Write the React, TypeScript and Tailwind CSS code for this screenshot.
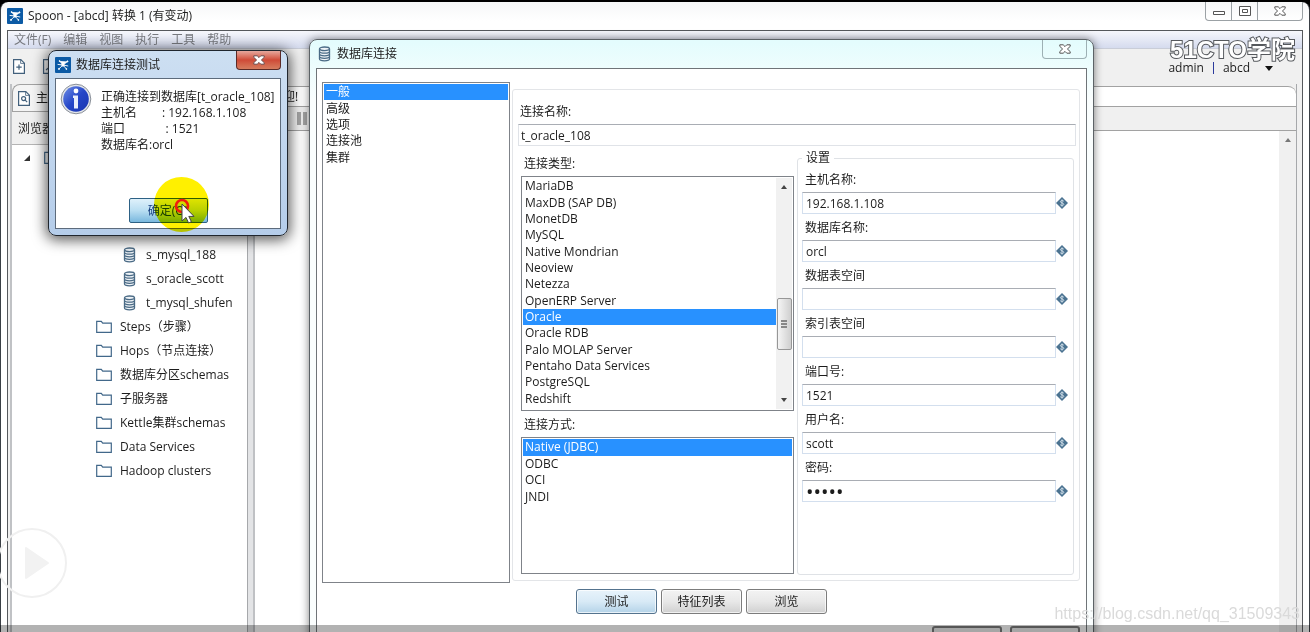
import type { ReactNode } from "react";

const FONT = "font-['Open_Sans','Noto_Sans_CJK_SC',sans-serif]";

const dbTypes = [
  "MariaDB",
  "MaxDB (SAP DB)",
  "MonetDB",
  "MySQL",
  "Native Mondrian",
  "Neoview",
  "Netezza",
  "OpenERP Server",
  "Oracle",
  "Oracle RDB",
  "Palo MOLAP Server",
  "Pentaho Data Services",
  "PostgreSQL",
  "Redshift",
];

const fields = [
  { id: "host", label: "主机名称:", value: "192.168.1.108" },
  { id: "database", label: "数据库名称:", value: "orcl" },
  { id: "data-space", label: "数据表空间", value: "" },
  { id: "index-space", label: "索引表空间", value: "" },
  { id: "port", label: "端口号:", value: "1521" },
  { id: "user", label: "用户名:", value: "scott" },
  { id: "password", label: "密码:", value: "scott" },
];

const folders = [
  "Steps（步骤）",
  "Hops（节点连接）",
  "数据库分区schemas",
  "子服务器",
  "Kettle集群schemas",
  "Data Services",
  "Hadoop clusters",
];

function SpoonIcon() {
  return (
    <svg viewBox="0 0 16 16" className="size-4 shrink-0" aria-hidden="true">
      <rect width="16" height="16" rx="1" fill="#0b5aa5" />
      <g stroke="#fff" strokeWidth=".9" fill="#fff">
        <path d="M4.6 4 8 8l4.6-3.6M8 8l-4 3.8M8 8l3.4 4M2.6 7.4 8 8l5.2 1" />
        <circle cx="8" cy="8" r="1.2" />
        <circle cx="4.6" cy="4" r=".5" />
        <circle cx="12.4" cy="4.4" r=".6" />
        <circle cx="4" cy="11.9" r=".6" />
        <circle cx="11.4" cy="12" r=".5" />
      </g>
    </svg>
  );
}

function DatabaseIcon() {
  return (
    <svg viewBox="0 0 13 16" className="h-4 w-[13px] shrink-0" fill="#eef3f7" stroke="#4b6b86" strokeWidth="1.3" aria-hidden="true">
      <path d="M1.5 3v10c0 1 2.2 1.8 5 1.8s5-.8 5-1.8V3" />
      <ellipse cx="6.5" cy="2.8" rx="5" ry="1.8" />
      <path fill="none" d="M1.5 5.4c0 1 2.2 1.8 5 1.8s5-.8 5-1.8M1.5 8c0 1 2.2 1.8 5 1.8s5-.8 5-1.8M1.5 10.6c0 1 2.2 1.8 5 1.8s5-.8 5-1.8" />
    </svg>
  );
}

function FolderIcon() {
  return (
    <svg viewBox="0 0 16 14" className="h-[14px] w-4 shrink-0" fill="none" stroke="#42688a" strokeWidth="1.2" aria-hidden="true">
      <path d="M.7 12.4V1.4h4.6l1.4 1.8h8.6v9.2z" />
    </svg>
  );
}

function PageIcon({ children }: { children: ReactNode }) {
  return (
    <svg viewBox="0 0 12 15" className="h-[15px] w-3 shrink-0" fill="none" stroke="#42607c" strokeWidth="1.2" aria-hidden="true">
      <path fill="#fff" d="M.6.6h7.2l3.6 3.6v10.2H.6z" />
      <path d="M7.6.8v3.6h3.6" strokeWidth=".8" />
      {children}
    </svg>
  );
}

function VariableIcon() {
  return (
    <svg viewBox="0 0 12 12" className="size-3 shrink-0" aria-hidden="true">
      <path d="M6 0 12 6 6 12 0 6z" fill="#4b7391" />
      <path d="M7.8 4.2C7 3.2 4.4 3.3 4.4 4.7c0 1.5 3.4 1 3.4 2.6 0 1.4-2.7 1.5-3.6.4M6 2.4v7.2" fill="none" stroke="#d5e2ec" strokeWidth=".9" />
    </svg>
  );
}

function CloseGlyph() {
  return (
    <svg viewBox="0 0 12 10" className="h-[10px] w-3" aria-hidden="true">
      <path
        d="M.8.8h3.4L6 2.6 7.8.8h3.4v1.6L8.4 5l2.8 2.6v1.6H7.8L6 7.4 4.2 9.2H.8V7.6L3.6 5 .8 2.4z"
        fill="#fff"
        stroke="currentColor"
        strokeWidth="1"
        strokeLinejoin="round"
      />
    </svg>
  );
}

function ListOption({ label, selected = false }: { label: string; selected?: boolean }) {
  return (
    <li
      role="option"
      aria-selected={selected}
      className={`flex min-h-0 flex-1 items-center pl-[2px] ${selected ? "bg-[#2891ff] text-white" : ""}`}
    >
      {label}
    </li>
  );
}

function PushButton({ children, primary = false }: { children: ReactNode; primary?: boolean }) {
  return (
    <button
      type="button"
      className={`h-[25px] w-[81px] rounded-[3px] border shadow-[inset_0_0_0_1px_rgba(255,255,255,0.7)] ${
        primary
          ? "border-[#54738e] bg-linear-to-b from-[#e8f3fb] via-[#d8eaf6] to-[#b4d3e8]"
          : "border-[#7c7c7c] bg-linear-to-b from-[#f3f3f3] via-[#e8e8e8] to-[#d0d0d0]"
      }`}
    >
      {children}
    </button>
  );
}

function MainWindow() {
  return (
    <main className="flex h-full flex-col rounded-t-lg border-x border-x-[#3a3f45] bg-linear-to-b from-[#f6f7f8] to-white to-3% px-[6px]">
      <header className="flex h-7 shrink-0 items-start justify-between">
        <h1 className="flex h-7 items-center gap-[5px]">
          <SpoonIcon />
          Spoon - [abcd] 转换 1 (有变动)
        </h1>
        <div className="flex h-[19px] divide-x divide-[#9ba1a5] rounded-b-[4px] border border-t-0 border-[#9ba1a5] text-[#555]">
          <button type="button" aria-label="最小化" className="flex w-[26px] items-center justify-center">
            <svg viewBox="0 0 12 10" className="h-[10px] w-3" fill="#fff" stroke="currentColor">
              <path d="M.5 5.5h11v3H.5z" />
            </svg>
          </button>
          <button type="button" aria-label="最大化" className="flex w-[26px] items-center justify-center">
            <svg viewBox="0 0 12 10" className="h-[10px] w-3" fill="#fff" stroke="currentColor">
              <path d="M.5.5h11v9H.5zM3.5 3.5h5v3h-5z" />
            </svg>
          </button>
          <button type="button" aria-label="关闭" className="flex w-[44px] items-center justify-center">
            <CloseGlyph />
          </button>
        </div>
      </header>

      <div className="flex min-h-0 flex-1 flex-col border border-b-0 border-[#55585c] bg-[#f0f0f0]">
        <nav className="flex h-[18px] shrink-0 items-center gap-3 border-b border-[#c9cdd8] bg-linear-to-b from-[#f6f7fc] to-[#d5dbee] pl-[6px] text-[#77797f]">
          {["文件(F)", "编辑", "视图", "执行", "工具", "帮助"].map((item) => (
            <button key={item} type="button">
              {item}
            </button>
          ))}
        </nav>
        <div className="flex h-[35px] shrink-0 items-center justify-between pr-[29px] pl-[5px]">
          <div className="flex gap-[18px]">
            <button type="button" aria-label="新建">
              <PageIcon>
                <path d="M6 5.4v5.4M3.3 8.1h5.4" />
              </PageIcon>
            </button>
            <button type="button" aria-label="打开">
              <PageIcon>
                <path d="M3 11 9 6" />
              </PageIcon>
            </button>
          </div>
          <div className="flex items-center gap-[9px] pt-[3px]">
            <span>admin</span>
            <span className="h-3 w-px bg-[#2b3a9c]" />
            <span>abcd</span>
            <svg viewBox="0 0 8 5" className="ml-[6px] h-[5px] w-2" aria-hidden="true">
              <path d="M0 0h8L4 5z" fill="#111" />
            </svg>
          </div>
        </div>

        <div className="flex min-h-0 flex-1 pr-[5px] pl-[2px]">
          <aside className="flex w-[238px] shrink-0 flex-col border-r border-l-2 border-r-[#a6a8ab] border-l-[#c0c2c5]">
            <div className="flex h-7 items-center gap-[6px] rounded-tl-lg border-t border-b border-l border-[#a2a2a2] bg-[#f4f4f4] pl-[5px]">
              <PageIcon>
                <circle cx="5.6" cy="7.6" r="2" />
                <path d="m7.2 9.2 2 2" />
              </PageIcon>
              主对象树
            </div>
            <div className="flex h-[33px] items-center border-b border-[#b4b4b4] pt-[2px] pl-[6px]">浏览器</div>
            <div className="min-h-0 flex-1 overflow-hidden bg-white pt-px">
              <div className="flex h-6 items-center gap-[14px] pl-3">
                <svg viewBox="0 0 6 6" className="size-[6px]" aria-hidden="true">
                  <path d="M6 0v6H0z" fill="#333" />
                </svg>
                <FolderIcon />
              </div>
              <ul className="pt-[73px]">
                {["s_mysql_188", "s_oracle_scott", "t_mysql_shufen"].map((name) => (
                  <li key={name} className="flex h-6 items-center gap-[10px] pl-[111px]">
                    <DatabaseIcon />
                    {name}
                  </li>
                ))}
                {folders.map((name) => (
                  <li key={name} className="flex h-6 items-center gap-2 pl-[84px] whitespace-nowrap">
                    <FolderIcon />
                    {name}
                  </li>
                ))}
              </ul>
            </div>
          </aside>
          <div className="w-[7px] shrink-0 border-r-2 border-[#bfc1c4] bg-[#e3e4e6]" />
          <section className="flex min-w-0 flex-1 flex-col border-r border-[#a6a8ab]">
            <div className="mt-[2px] flex h-[21px] shrink-0 items-center rounded-tr-lg border-t border-b border-[#a2a2a2] bg-white pl-[28px]">
              迎!
            </div>
            <div className="flex h-6 shrink-0 items-center gap-[2px] border-b border-[#a2a2a2] pl-[42px]">
              <span className="h-[13px] w-[4px] bg-[#a3a3a3]" />
              <span className="h-[13px] w-[4px] bg-[#a3a3a3]" />
            </div>
            <div className="flex min-h-0 flex-1 justify-end bg-white">
              <div className="flex w-[17px] justify-center bg-[#f0f0f0] pt-[7px]">
                <svg viewBox="0 0 6 4" className="h-1 w-[6px]" aria-hidden="true">
                  <path d="M3 0 6 4H0z" fill="#777" />
                </svg>
              </div>
            </div>
          </section>
        </div>
      </div>
    </main>
  );
}

function ConnectionDialog() {
  return (
    <section
      aria-label="数据库连接"
      className="absolute top-[39px] right-[216px] -bottom-3 left-[309px] flex flex-col rounded-t-lg border border-[#5c6266] bg-linear-to-b from-[#e3fcfd] to-[#fafefe] to-10% px-[6px] shadow-[0_0_9px_rgba(0,0,0,0.5)]"
    >
      <header className="flex h-7 shrink-0 items-start justify-between">
        <h2 className="flex h-7 items-center gap-[6px] pl-[2px]">
          <DatabaseIcon />
          数据库连接
        </h2>
        <button
          type="button"
          aria-label="关闭"
          className="flex h-[19px] w-[45px] items-center justify-center rounded-b-[4px] border border-t-0 border-[#9db0b4] text-[#555]"
        >
          <CloseGlyph />
        </button>
      </header>
      <div className="flex min-h-0 flex-1 flex-col border border-b-0 border-[#6f7478] bg-white pt-[13px]">
        <div className="flex h-[501px] shrink-0 gap-[2px] pr-[6px] pl-[5px]">
          <div className="w-[188px] shrink-0 border border-[#7f8389] p-px">
            <ul role="listbox" aria-label="类别" className="flex h-[82px] flex-col">
              {["一般", "高级", "选项", "连接池", "集群"].map((name, i) => (
                <ListOption key={name} label={name} selected={i === 0} />
              ))}
            </ul>
          </div>
          <div className="mt-[7px] mb-[2px] flex min-w-0 flex-1 flex-col rounded-[3px] border border-[#e3e5e8] pt-[14px] pr-[3px] pl-[5px]">
            <label htmlFor="name" className="pl-[2px]">
              连接名称:
            </label>
            <input
              id="name"
              defaultValue="t_oracle_108"
              className="mt-1 h-[22px] border border-[#e0e3e8] border-t-[#a9adb4] pl-[2px]"
            />
            <div className="grid min-h-0 flex-1 grid-cols-[273px_minmax(0,1fr)] gap-[3px] pr-[2px] pb-[5px] pl-[3px]">
              <div className="flex flex-col gap-1 pt-2">
                <span id="type-label" className="pt-[2px] pl-[3px]">
                  连接类型:
                </span>
                <div className="flex h-[235px] shrink-0 border border-[#7f8389] p-px">
                  <ul role="listbox" aria-labelledby="type-label" className="flex flex-1 flex-col pb-[2px]">
                    {dbTypes.map((name) => (
                      <ListOption key={name} label={name} selected={name === "Oracle"} />
                    ))}
                  </ul>
                  <div className="flex w-4 flex-col items-center bg-[#f1f1f1] pt-[7px] pb-[7px]">
                    <svg viewBox="0 0 6 4" className="h-1 w-[6px]" aria-hidden="true">
                      <path d="M3 0 6 4H0z" fill="#444" />
                    </svg>
                    <span className="mt-[109px] flex h-[52px] w-[15px] flex-col items-center justify-center gap-px rounded-[2px] border border-[#979797] bg-linear-to-r from-[#f5f5f5] to-[#cfcfcf]">
                      <span className="h-[2px] w-[6px] bg-[#888]" />
                      <span className="h-[2px] w-[6px] bg-[#888]" />
                      <span className="h-[2px] w-[6px] bg-[#888]" />
                    </span>
                    <svg viewBox="0 0 6 4" className="mt-auto h-1 w-[6px]" aria-hidden="true">
                      <path d="M0 0h6L3 4z" fill="#444" />
                    </svg>
                  </div>
                </div>
                <span id="access-label" className="pt-[2px] pl-[3px]">
                  连接方式:
                </span>
                <div className="h-[137px] shrink-0 border border-[#7f8389] p-px">
                  <ul role="listbox" aria-labelledby="access-label" className="flex h-[66px] flex-col">
                    {["Native (JDBC)", "ODBC", "OCI", "JNDI"].map((name, i) => (
                      <ListOption key={name} label={name} selected={i === 0} />
                    ))}
                  </ul>
                </div>
              </div>
              <fieldset className="mt-1 min-w-0 rounded-[3px] border border-[#dfe2e6] pr-[5px] pl-[4px]">
                <legend className="px-1">设置</legend>
                <div className="flex flex-col gap-1 pt-1">
                  {fields.map(({ id, label, value }) => (
                    <div key={id} className="flex flex-col gap-1">
                      <label htmlFor={id} className="pt-[2px] pl-[3px]">
                        {label}
                      </label>
                      <div className="flex items-center">
                        <input
                          id={id}
                          type={id === "password" ? "password" : "text"}
                          defaultValue={value}
                          className={`h-[22px] min-w-0 flex-1 border border-[#d3dfee] border-t-[#a9adb4] pl-[3px] ${
                            id === "password" ? "text-xl leading-5" : ""
                          }`}
                        />
                        <VariableIcon />
                      </div>
                    </div>
                  ))}
                </div>
              </fieldset>
            </div>
          </div>
        </div>
        <div className="flex shrink-0 justify-center gap-1 pt-[6px]">
          <PushButton primary>测试</PushButton>
          <PushButton>特征列表</PushButton>
          <PushButton>浏览</PushButton>
        </div>
        <div className="flex shrink-0 justify-end gap-2 pt-3 pr-[6px]">
          <button type="button" aria-label="确认" className="h-[25px] w-[70px] rounded-[3px] border-2 border-[#7c7c7c] bg-[#eee]" />
          <button type="button" aria-label="取消" className="h-[25px] w-[70px] rounded-[3px] border-2 border-[#7c7c7c] bg-[#eee]" />
        </div>
      </div>
    </section>
  );
}

function TestResultDialog() {
  return (
    <section
      role="dialog"
      aria-label="数据库连接测试"
      className="absolute top-[50px] left-[48px] flex h-[186px] w-[240px] flex-col rounded-lg border border-[#20262e] bg-linear-to-b from-[#cddff2] to-[#b5cdea] px-[6px] pb-[6px] shadow-[0_2px_14px_2px_rgba(0,0,0,0.65)]"
    >
      <header className="flex h-[27px] items-start justify-between">
        <h2 className="flex h-[27px] items-center gap-[5px]">
          <SpoonIcon />
          数据库连接测试
        </h2>
        <button
          type="button"
          aria-label="关闭"
          className="flex h-[19px] w-[45px] items-center justify-center rounded-b-[4px] border border-t-0 border-[#5b2a26] bg-linear-to-b from-[#e5a79d] via-[#cf4a37] to-[#d67c5e] text-[#6b4a4a]"
        >
          <CloseGlyph />
        </button>
      </header>
      <div className="flex flex-1 flex-col items-center justify-between border border-[#5d6b7c] bg-white pt-[4px] pb-[5px]">
        <div className="flex gap-[9px] self-stretch pl-1">
          <svg viewBox="0 0 32 32" className="size-8 shrink-0" aria-hidden="true">
            <defs>
              <linearGradient id="info" x1="0" y1="0" x2="1" y2="1">
                <stop offset="0" stopColor="#6f8fe6" />
                <stop offset=".5" stopColor="#2546c8" />
                <stop offset="1" stopColor="#1a36ae" />
              </linearGradient>
            </defs>
            <circle cx="16" cy="16" r="14.8" fill="#e2e5ea" stroke="#8a9099" strokeWidth="1" />
            <circle cx="16" cy="16" r="12.8" fill="url(#info)" />
            <circle cx="16" cy="8" r="2.4" fill="#fff" />
            <path d="M13 12.5h5v13h-4v-10.5h-1z" fill="#e9eefc" />
          </svg>
          <div className="pt-[6px] leading-4 whitespace-pre">
            <p>正确连接到数据库[t_oracle_108]</p>
            <p>{"主机名        : 192.168.1.108"}</p>
            <p>{"端口             : 1521"}</p>
            <p>数据库名:orcl</p>
          </div>
        </div>
        <button
          type="button"
          className="h-[25px] w-[79px] rounded-[2px] border border-[#2d6185] bg-linear-to-b from-[#dff1fb] via-[#b9def2] to-[#79b8de] text-[#173f80]"
        >
          确定(O)
        </button>
      </div>
      <div className="pointer-events-none absolute top-[126px] left-[105px] size-[55px] rounded-full bg-[#fff000] mix-blend-multiply" />
      <svg viewBox="0 0 24 28" className="pointer-events-none absolute top-[146px] left-[124px] h-7 w-6" aria-hidden="true">
        <circle cx="9" cy="9" r="6" fill="none" stroke="#f01e0c" strokeWidth="2.6" />
        <path d="M9 7v17l4-3.6 2.6 5.6 2.8-1.4-2.6-5.2H21z" fill="#fff" stroke="#444" strokeWidth="1" />
      </svg>
    </section>
  );
}

export default function App() {
  return (
    <div className={`relative h-screen overflow-hidden bg-black pt-[2px] text-xs leading-4 text-[#1c1c1c] ${FONT}`}>
      <MainWindow />
      <ConnectionDialog />
      <TestResultDialog />

      <div className="absolute top-[38px] right-[15px] font-['Liberation_Sans','Noto_Sans_CJK_SC',sans-serif] text-2xl leading-6 font-bold whitespace-nowrap text-white [-webkit-text-stroke:2px_#55585c] [paint-order:stroke_fill]">
        51CTO学院
      </div>
      <svg viewBox="0 0 70 70" className="absolute bottom-[34px] -left-[3px] size-[70px]" aria-hidden="true">
        <circle cx="35" cy="35" r="34" fill="none" stroke="#f0f0f0" strokeWidth="2" />
        <path d="M29 20 51 35 29 50z" fill="#f2f2f2" stroke="#f2f2f2" strokeWidth="2" strokeLinejoin="round" />
      </svg>
      <div className="absolute right-[10px] bottom-[8px] font-['Liberation_Sans',sans-serif] text-base leading-5 text-[#dadada]">
        https://blog.csdn.net/qq_31509343
      </div>
      <div className="absolute inset-x-0 bottom-0 h-[7px] bg-black/30" />
    </div>
  );
}
